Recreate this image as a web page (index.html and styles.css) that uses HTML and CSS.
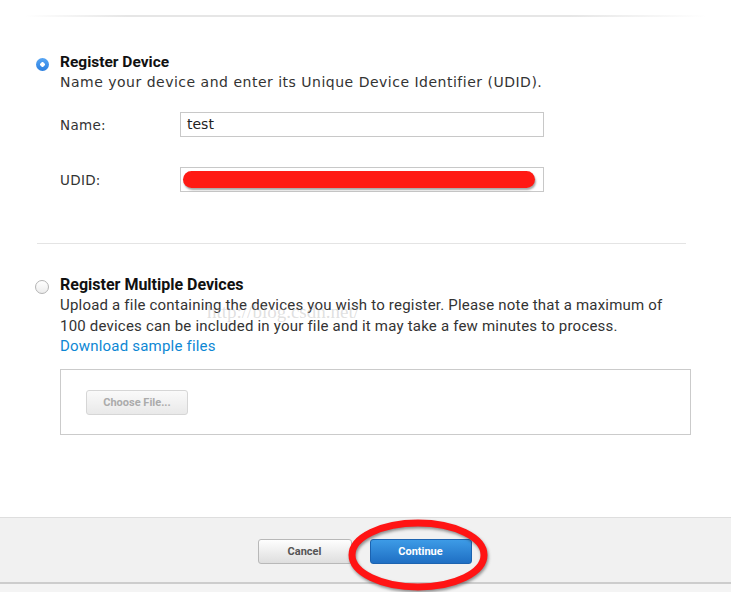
FILE: index.html
```html
<!doctype html>
<html lang="en">
<head>
    <meta charset="UTF-8">
    <title>Register Device</title>
    <link rel="stylesheet" href="styles.css">
</head>
<body>
<div class="page">
    <div class="top-shadow"></div>

    <div class="option option-single">
        <span class="radio radio-on"></span>
        <div class="option-body">
            <h3>Register Device</h3>
            <p class="desc-lucida">Name your device and enter its Unique Device Identifier (UDID).</p>
            <div class="field">
                <label>Name:</label>
                <div class="input">test</div>
            </div>
            <div class="field field-udid">
                <label>UDID:</label>
                <div class="input"><span class="scribble"></span></div>
            </div>
        </div>
    </div>

    <div class="divider"></div>

    <div class="option option-multi">
        <span class="radio"></span>
        <div class="option-body">
            <h3>Register Multiple Devices</h3>
            <p class="desc">Upload a file containing the devices you wish to register. Please note that a maximum of<br>
                100 devices can be included in your file and it may take a few minutes to process.</p>
            <a href="#" class="link">Download sample files</a>
            <div class="upload-box">
                <button type="button" class="btn-file">Choose File...</button>
            </div>
        </div>
        <span class="watermark">http://blog.csdn.net/</span>
    </div>

    <div class="footer">
        <button type="button" class="btn btn-cancel">Cancel</button>
        <button type="button" class="btn btn-continue">Continue</button>
        <svg class="circle-mark" width="160" height="86" viewBox="0 0 160 86">
            <ellipse cx="76" cy="40" rx="66" ry="32" fill="none" stroke="#ff1414" stroke-width="7"/>
        </svg>
    </div>
    <div class="footer-under"></div>
</div>
</body>
</html>
```

FILE: styles.css
```css
* {
    margin: 0;
    padding: 0;
}

body {
    background: #fff;
    font-family: "DejaVu Sans", sans-serif;
    color: #333;
}

.page {
    width: 731px;
    height: 592px;
    overflow: hidden;
}

.top-shadow {
    height: 2px;
    margin: 15px 25px 0;
    background: linear-gradient(to right, rgba(225,225,225,0), #e6e6e6 15%, #e6e6e6 80%, rgba(225,225,225,0));
}

.option {
    display: flex;
    position: relative;
}

.option-single {
    margin-top: 35px;
    padding-left: 36px;
}

.option-multi {
    margin-top: 31px;
    padding-left: 35px;
}

.radio {
    width: 13px;
    height: 13px;
    border-radius: 50%;
    margin-top: 6px;
    margin-right: 11px;
    box-sizing: border-box;
    border: 1px solid #b4b4b4;
    background: linear-gradient(#fff, #ececec);
    flex-shrink: 0;
}

.option-multi .radio {
    width: 14px;
    height: 14px;
    margin-top: 5px;
}

.radio-on {
    border: none;
    background: radial-gradient(circle, #fff 0, #fff 2px, transparent 2.5px), linear-gradient(#57a6f4, #2b7fe0);
}

.option-body h3 {
    font-family: Roboto, "Liberation Sans", sans-serif;
    font-size: 16px;
    font-weight: 700;
    color: #111;
    line-height: 20px;
}

.option-single h3 {
    font-size: 15.5px;
}

.desc-lucida {
    font-size: 14px;
    letter-spacing: 0.5px;
    line-height: 20px;
    color: #333;
}

.field {
    display: flex;
    align-items: center;
    margin-top: 20px;
}

.field-udid {
    margin-top: 30px;
}

.field label {
    width: 120px;
    font-size: 13.5px;
    letter-spacing: 0.3px;
    color: #333;
}

.input {
    width: 364px;
    height: 25px;
    box-sizing: border-box;
    border: 1px solid #c8c8c8;
    padding-left: 6px;
    font-size: 14px;
    line-height: 23px;
    color: #222;
}

.field-udid .input {
    padding: 3px 0 0 2px;
}

.scribble {
    display: block;
    width: 352px;
    height: 17px;
    border-radius: 9px;
    background: #ff1a14;
    box-shadow: 1px 2px 2px rgba(60, 60, 60, 0.45);
}

.divider {
    height: 1px;
    margin: 51px 45px 0 37px;
    background: #e4e4e4;
}

.desc {
    font-family: Roboto, "Liberation Sans", sans-serif;
    font-size: 15px;
    letter-spacing: 0.2px;
    line-height: 21px;
    color: #333;
}

.link {
    display: block;
    font-family: Roboto, "Liberation Sans", sans-serif;
    font-size: 15px;
    letter-spacing: 0.2px;
    line-height: 19px;
    color: #0d87d4;
    text-decoration: none;
}

.upload-box {
    width: 631px;
    height: 66px;
    box-sizing: border-box;
    margin-top: 13px;
    border: 1px solid #cbcbcb;
    padding: 20px 0 0 25px;
}

.btn-file {
    width: 102px;
    height: 25px;
    border: 1px solid #d6d6d6;
    border-radius: 3px;
    background: linear-gradient(#fafafa, #e9e9e9);
    font-family: Roboto, "Liberation Sans", sans-serif;
    font-size: 11px;
    font-weight: 700;
    color: #ababab;
    outline: none;
}

.watermark {
    position: absolute;
    left: 207px;
    top: 26px;
    font-family: "Liberation Serif", serif;
    font-size: 19px;
    color: rgba(175, 175, 175, 0.4);
}

.footer {
    position: relative;
    display: flex;
    justify-content: center;
    gap: 18px;
    margin-top: 82px;
    height: 67px;
    box-sizing: border-box;
    padding-top: 21px;
    padding-right: 2px;
    background: #f1f1f1;
    border-top: 1px solid #dedede;
    border-bottom: 2px solid #cdcdcd;
}

.btn {
    height: 25px;
    border-radius: 3px;
    font-family: Roboto, "Liberation Sans", sans-serif;
    font-size: 11px;
    font-weight: 700;
    outline: none;
}

.btn-cancel {
    width: 94px;
    border: 1px solid #b8b8b8;
    background: linear-gradient(#fefefe, #dedede);
    color: #555;
}

.btn-continue {
    width: 102px;
    border: 1px solid #1c63b0;
    background: linear-gradient(#3d9be6, #1f6fc4);
    color: #fff;
}

.circle-mark {
    position: absolute;
    left: 342px;
    top: -3px;
    filter: drop-shadow(1px 2px 1.5px rgba(40, 40, 40, 0.5));
}

.footer-under {
    height: 8px;
    background: #f4f4f4;
}
```
